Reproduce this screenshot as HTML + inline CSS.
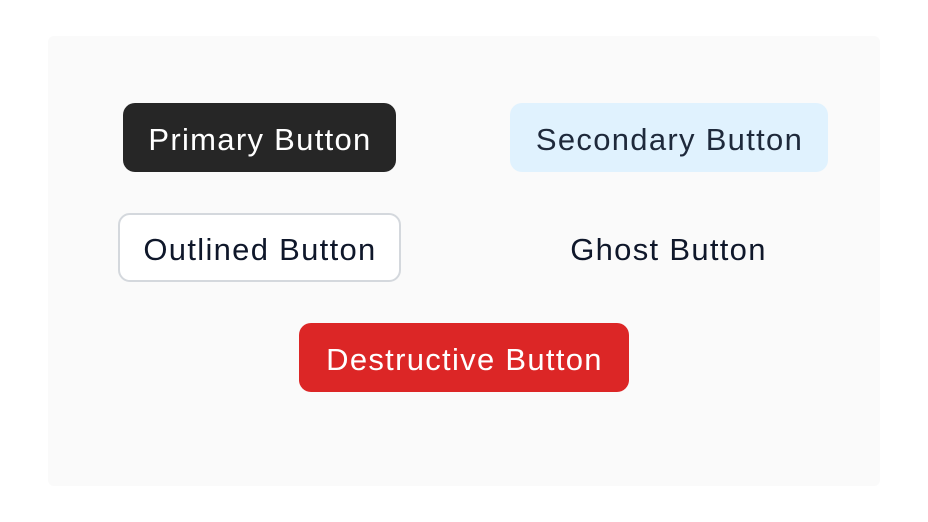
<!DOCTYPE html>
<html><head><style>
body{margin:0;width:928px;height:522px;background:#fff;font-family:"Liberation Sans",sans-serif;position:relative;overflow:hidden}
.panel{position:absolute;left:48px;top:36px;width:832px;height:450px;background:#fafafa;border-radius:6px}
.b{position:absolute;display:flex;align-items:center;justify-content:center;font-size:31px;letter-spacing:1.3px;padding-top:4px;padding-left:1px;border-radius:12px;box-sizing:border-box;white-space:nowrap;color:#0f172a}
</style></head><body>
<div class="panel"></div>
<div class="b" style="left:123px;top:103px;width:273px;height:69px;background:#262626;color:#fff">Primary Button</div>
<div class="b" style="left:510px;top:103px;width:318px;height:69px;background:#e0f2fe;color:#1e293b">Secondary Button</div>
<div class="b" style="left:118px;top:213px;width:283px;height:69px;background:#fff;border:2px solid #d4d8dd">Outlined Button</div>
<div class="b" style="left:520px;top:213px;width:296px;height:69px">Ghost Button</div>
<div class="b" style="left:299px;top:323px;width:330px;height:69px;background:#dc2626;color:#fff">Destructive Button</div>
</body></html>
